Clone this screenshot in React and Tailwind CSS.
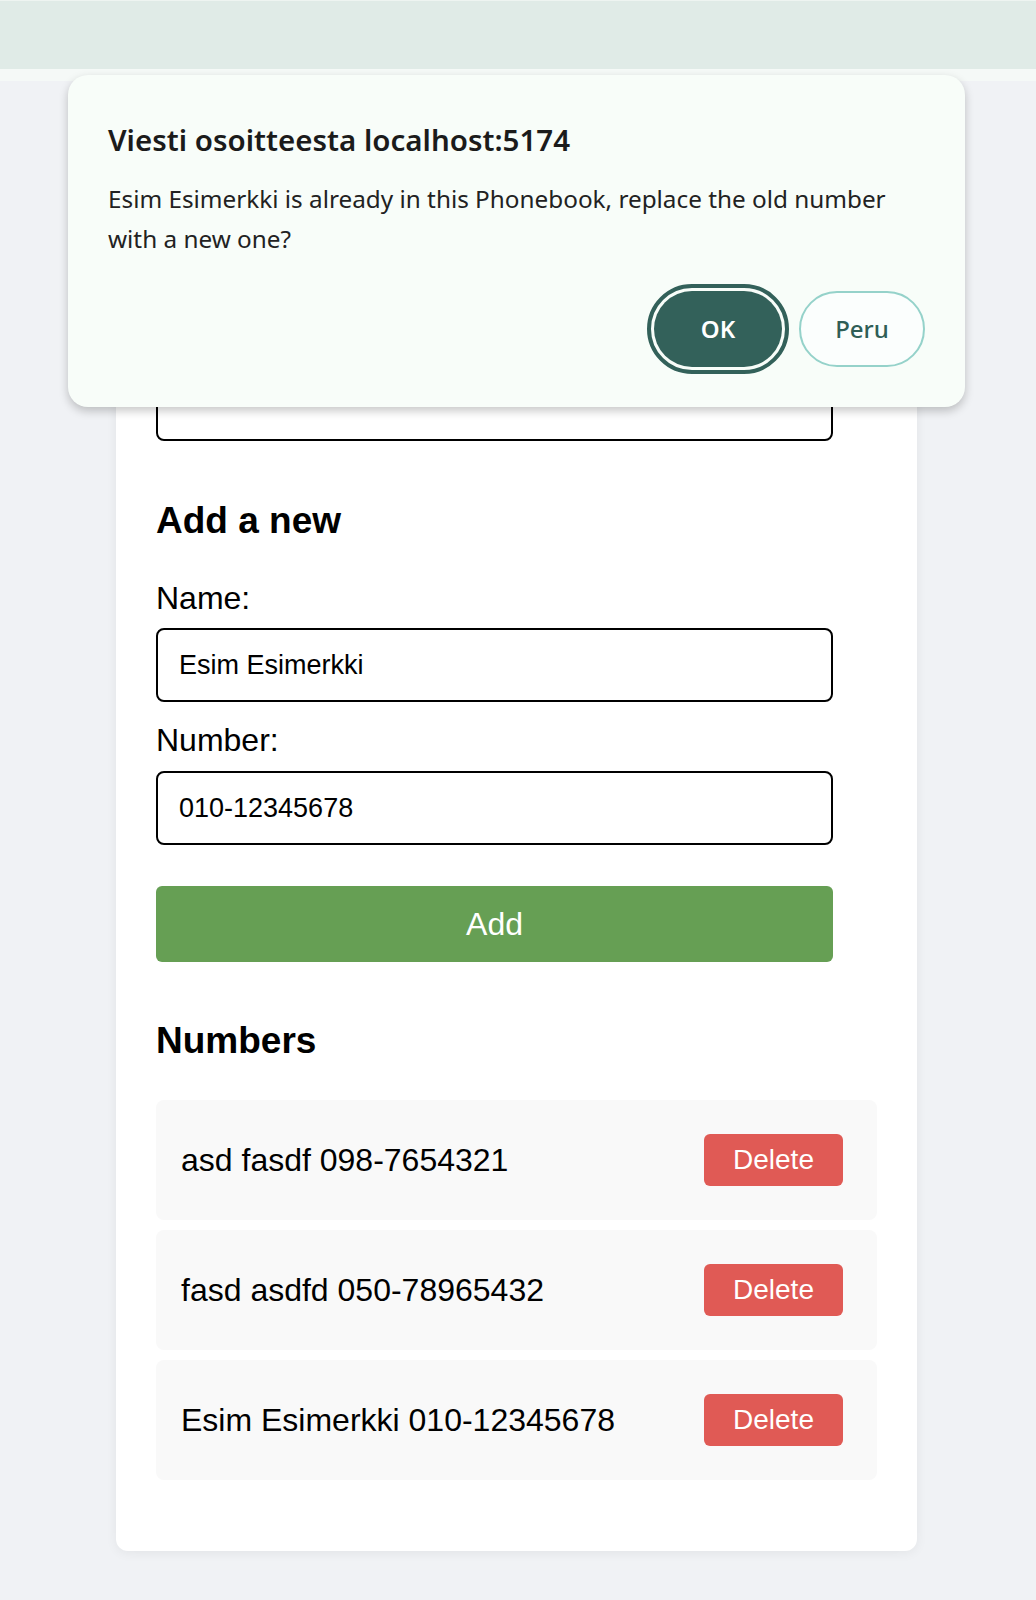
import React from 'react';

const contacts = [
    { id: 1, name: 'asd fasdf', number: '098-7654321' },
    { id: 2, name: 'fasd asdfd', number: '050-78965432' },
    { id: 3, name: 'Esim Esimerkki', number: '010-12345678' },
];

function ConfirmDialog() {
    return (
        <div className="absolute top-[75px] left-[68px] w-[897px] rounded-[20px] bg-[#f8fdf9] pt-[45px] px-[40px] pb-[40px] shadow-[0_4px_10px_rgba(0,0,0,0.22)] font-['Noto_Sans',sans-serif]">
            <h2 className="text-[29.5px] leading-[40px] font-semibold text-[#1b1b1b]">Viesti osoitteesta localhost:5174</h2>
            <p className="mt-[19px] text-[24.3px] leading-[40px] text-[#222]">
                <span className="block">Esim Esimerkki is already in this Phonebook, replace the old number</span>
                <span className="block">with a new one?</span>
            </p>
            <div className="mt-[32px] flex justify-end gap-[17px]">
                <button className="w-[128px] h-[76px] rounded-full bg-[#33615a] text-white text-[24px] font-semibold outline-[4px] outline-solid outline-[#33615a] outline-offset-[3px]">
                    OK
                </button>
                <button className="w-[126px] h-[76px] rounded-full border-2 border-[#95d2ca] bg-[#fbfefd] text-[#2f5e56] text-[24px] font-medium">
                    Peru
                </button>
            </div>
        </div>
    );
}

function Field({ label, value, gap, height }) {
    return (
        <div>
            <label className="block text-[32px] leading-[32px]">{label}</label>
            <input
                readOnly
                value={value}
                className={`${gap} ${height} block w-[677px] border-2 border-black rounded-[8px] px-[21px] text-[27px] bg-white outline-none`}
            />
        </div>
    );
}

function App() {
    return (
        <div className="relative min-h-[1600px] bg-[#f0f2f5] font-['Liberation_Sans',Arial,sans-serif] text-black">
            <div className="h-[69px] bg-[#e0ebe7] border-t border-[#eef4f1]" />
            <div className="h-[12px] bg-[#f5f9f7]" />

            <div className="ml-[116px] mt-[102px] w-[801px] rounded-[12px] bg-white px-10 pt-10 pb-[71px] shadow-[0_2px_12px_rgba(0,0,0,0.06)]">
                <h1 className="text-[48px] leading-[56px] font-bold">Phonebook</h1>
                <div className="mt-[43px]">
                    <Field label="filter shown with" value="" gap="mt-[14px]" height="h-[73px]" />
                </div>

                <h2 className="mt-[61px] text-[37px] leading-[37px] font-bold">Add a new</h2>
                <div className="mt-[43px]">
                    <Field label="Name:" value="Esim Esimerkki" gap="mt-[14px]" height="h-[74px]" />
                </div>
                <div className="mt-[22px]">
                    <Field label="Number:" value="010-12345678" gap="mt-[15px]" height="h-[74px]" />
                </div>
                <button className="mt-[41px] block w-[677px] h-[76px] rounded-[6px] bg-[#669f54] text-white text-[32px]">
                    Add
                </button>

                <h2 className="mt-[60px] text-[37px] leading-[37px] font-bold">Numbers</h2>
                <ul className="mt-[41px] flex flex-col gap-[10px]">
                    {contacts.map((c) => (
                        <li key={c.id} className="h-[120px] rounded-[8px] bg-[#f9f9f9] pl-[25px] pr-[34px] flex items-center justify-between">
                            <span className="text-[32px] leading-[32px]">{c.name} {c.number}</span>
                            <button className="w-[139px] h-[52px] rounded-[6px] bg-[#e05a55] text-white text-[28px]">Delete</button>
                        </li>
                    ))}
                </ul>
            </div>

            <ConfirmDialog />
        </div>
    );
}

export default App;
